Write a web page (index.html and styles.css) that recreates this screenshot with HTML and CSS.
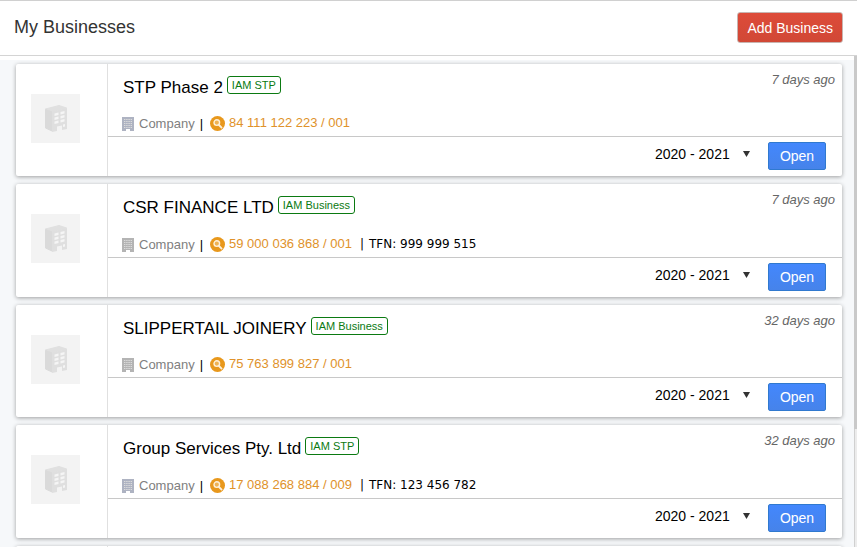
FILE: index.html
```html
<!DOCTYPE html>
<html lang="en">
<head>
    <meta charset="UTF-8">
    <meta name="viewport" content="width=device-width, initial-scale=1.0">
    <title>My Businesses</title>
    <link rel="stylesheet" href="styles.css">
</head>
<body>

    <!-- Shared icons -->
    <svg class="icon-defs" aria-hidden="true">
        <symbol id="icon-logo" viewBox="0 0 49 49">
            <path fill="#e0e0e0" stroke="#e0e0e0" stroke-linejoin="round" d="M14.500 15 L28 11.500 L35.500 14 L21 17.500 Z"/>
            <path fill="#dadada" stroke="#dadada" stroke-linejoin="round" d="M14.500 15.500 L21 18 L21 37 L14.500 34 Z"/>
            <path fill="#dfdfdf" d="M21 17.500 L36 14 L36 35 L31 36 L31 31.500 L26 32.500 L26 37 L21 38 Z"/>
            <path fill="#f5f5f5" d="M23.500 19.500l4-1v2.500l-4 1z M29.500 18l4-1v2.500l-4 1z M23.500 23.500l4-1v2.500l-4 1z M29.500 22l4-1v2.500l-4 1z M23.500 27.500l4-1v2.500l-4 1z M29.500 26l4-1v2.500l-4 1z M32 30.500l2-.5v2.500l-2 .5z"/>
        </symbol>
        <symbol id="icon-company" viewBox="0 0 12 14">
            <path fill="currentColor" d="M0 0h12v14H8v-2H4v2H0z"/>
            <path class="windows" d="M2 2.5h8M2 4.5h8M2 6.5h8M2 8.5h8M2 10.5h8" stroke-width="1" stroke-dasharray="1.4 .8" fill="none"/>
        </symbol>
        <symbol id="icon-search" viewBox="0 0 15 15">
            <circle cx="7.5" cy="7.5" r="7.5" fill="#e8981c"/>
            <circle cx="6.8" cy="6.6" r="2.8" fill="#efb353" stroke="#fdf0da" stroke-width="1.4"/>
            <path d="M9 9l2.6 2.6" stroke="#fdf0da" stroke-width="1.8" stroke-linecap="round"/>
        </symbol>
    </svg>

    <!-- Page Header -->
    <header class="page-header">
        <h1>My Businesses</h1>
        <button type="button" class="btn-add">Add Business</button>
    </header>

    <!-- Business List -->
    <div class="list-wrap">
        <main class="business-list">

            <article class="card">
                <div class="card-logo"><svg><use href="#icon-logo"/></svg></div>
                <div class="card-body">
                    <div class="card-info">
                        <div class="card-title">
                            <h2>STP Phase 2</h2>
                            <span class="badge">IAM STP</span>
                            <span class="updated">7 days ago</span>
                        </div>
                        <div class="details">
                            <svg class="company-icon blue"><use href="#icon-company"/></svg>
                            <span class="type">Company</span>
                            <span class="sep">|</span>
                            <a href="#" class="abn"><svg><use href="#icon-search"/></svg>84 111 122 223 / 001</a>
                        </div>
                    </div>
                    <div class="card-actions">
                        <div class="year"><select aria-label="Financial year for STP Phase 2"><option>2020 - 2021</option></select></div>
                        <button type="button" class="btn-open">Open</button>
                    </div>
                </div>
            </article>

            <article class="card">
                <div class="card-logo"><svg><use href="#icon-logo"/></svg></div>
                <div class="card-body">
                    <div class="card-info">
                        <div class="card-title">
                            <h2>CSR FINANCE LTD</h2>
                            <span class="badge">IAM Business</span>
                            <span class="updated">7 days ago</span>
                        </div>
                        <div class="details">
                            <svg class="company-icon"><use href="#icon-company"/></svg>
                            <span class="type">Company</span>
                            <span class="sep">|</span>
                            <a href="#" class="abn"><svg><use href="#icon-search"/></svg>59 000 036 868 / 001</a>
                            <span class="tfn"><span>|</span>TFN: 999 999 515</span>
                        </div>
                    </div>
                    <div class="card-actions">
                        <div class="year"><select aria-label="Financial year for CSR FINANCE LTD"><option>2020 - 2021</option></select></div>
                        <button type="button" class="btn-open">Open</button>
                    </div>
                </div>
            </article>

            <article class="card">
                <div class="card-logo"><svg><use href="#icon-logo"/></svg></div>
                <div class="card-body">
                    <div class="card-info">
                        <div class="card-title">
                            <h2>SLIPPERTAIL JOINERY</h2>
                            <span class="badge">IAM Business</span>
                            <span class="updated">32 days ago</span>
                        </div>
                        <div class="details">
                            <svg class="company-icon"><use href="#icon-company"/></svg>
                            <span class="type">Company</span>
                            <span class="sep">|</span>
                            <a href="#" class="abn"><svg><use href="#icon-search"/></svg>75 763 899 827 / 001</a>
                        </div>
                    </div>
                    <div class="card-actions">
                        <div class="year"><select aria-label="Financial year for SLIPPERTAIL JOINERY"><option>2020 - 2021</option></select></div>
                        <button type="button" class="btn-open">Open</button>
                    </div>
                </div>
            </article>

            <article class="card">
                <div class="card-logo"><svg><use href="#icon-logo"/></svg></div>
                <div class="card-body">
                    <div class="card-info">
                        <div class="card-title">
                            <h2>Group Services Pty. Ltd</h2>
                            <span class="badge">IAM STP</span>
                            <span class="updated">32 days ago</span>
                        </div>
                        <div class="details">
                            <svg class="company-icon blue"><use href="#icon-company"/></svg>
                            <span class="type">Company</span>
                            <span class="sep">|</span>
                            <a href="#" class="abn"><svg><use href="#icon-search"/></svg>17 088 268 884 / 009</a>
                            <span class="tfn"><span>|</span>TFN: 123 456 782</span>
                        </div>
                    </div>
                    <div class="card-actions">
                        <div class="year"><select aria-label="Financial year for Group Services Pty. Ltd"><option>2020 - 2021</option></select></div>
                        <button type="button" class="btn-open">Open</button>
                    </div>
                </div>
            </article>

            <article class="card">
                <div class="card-logo"></div>
            </article>

        </main>
        <div class="scroll-track"><div class="scroll-thumb"></div></div>
    </div>

</body>
</html>
```
FILE: styles.css
```css
* {
    box-sizing: border-box;
}

body {
    margin: 0;
    height: 100vh;
    display: flex;
    flex-direction: column;
    overflow: hidden;
    font-family: "Liberation Sans", Arial, sans-serif;
    font-size: 13px;
    color: #000;
    background-color: #fff;
}

.icon-defs {
    display: none;
}

button, select {
    font-family: inherit;
    font-size: 14px;
}

/* Page Header */
.page-header {
    display: flex;
    justify-content: space-between;
    align-items: center;
    padding: 11px 14px 12px 14px;
    border-top: 1px solid #d0d0d0;
    border-bottom: 1px solid #d4d4d4;
}

.page-header h1 {
    margin: 0;
    font-size: 18px;
    font-weight: normal;
    line-height: 28px;
    padding-bottom: 2px;
    color: #333;
}

.btn-add {
    height: 31px;
    padding: 0 9px;
    color: #fff;
    background: linear-gradient(#dd4b39, #d14836);
    border: 1px solid #c8b4b0;
    border-radius: 3px;
}

/* Business List */
.list-wrap {
    flex: 1;
    min-height: 0;
    display: flex;
}

.business-list {
    flex: 1;
    display: flex;
    flex-direction: column;
    gap: 8px;
    overflow: hidden;
    padding: 4px 12px 0 16px;
    border-top: 4px solid #fff;
    background-color: #f6f8fa;
}

.scroll-track {
    width: 3px;
    background-color: #ececec;
    border-left: 1px solid #d0d0d0;
}

.scroll-thumb {
    height: 76%;
    margin-left: -1px;
    background-color: #c9c9c9;
}

/* Cards */
.card {
    display: flex;
    flex-shrink: 0;
    background-color: #fff;
    border-radius: 2px;
    box-shadow: 0 1px 4px rgba(0, 0, 0, 0.37);
}

.card-logo {
    width: 92px;
    padding: 30px 0 0 15px;
    border-right: 1px solid #e0e0e0;
}

.card-logo svg {
    display: block;
    width: 49px;
    height: 49px;
    background-color: #f3f3f3;
}

.card-body {
    flex: 1;
}

.card-info {
    padding: 8px 7px 4px 15px;
    border-bottom: 1px solid #c8c8c8;
}

.card-title {
    display: flex;
    align-items: flex-start;
    gap: 4px;
    height: 43px;
}

.card-title h2 {
    margin: 0;
    padding-top: 6px;
    font-size: 17px;
    font-weight: normal;
    line-height: 20px;
}

.badge {
    margin-top: 4px;
    padding: 0 4px;
    font-size: 11px;
    line-height: 16px;
    color: #0b7a12;
    border: 1px solid #0b7a12;
    border-radius: 3px;
}

.updated {
    margin-left: auto;
    font-style: italic;
    line-height: 16px;
    color: #666;
}

.details {
    display: flex;
    align-items: flex-end;
    line-height: 16px;
}

.company-icon {
    width: 12px;
    height: 14px;
    margin: 0 5px 1px -1px;
    color: #b4b4b4;
}

.windows {
    stroke: #dcdcdc;
}

.company-icon.blue {
    color: #aeb3c2;
}

.type {
    color: #808080;
}

.sep {
    margin: 0 7px 0 5px;
}

.abn {
    display: flex;
    align-items: center;
    gap: 4px;
    padding-bottom: 1px;
    color: #e0922a;
    text-decoration: none;
}

.abn svg {
    width: 15px;
    height: 15px;
}

.tfn {
    display: flex;
    gap: 5px;
    margin-left: 8px;
    font-family: "DejaVu Sans", Tahoma, sans-serif;
    font-size: 12px;
    line-height: 18px;
}

/* Card Actions */
.card-actions {
    display: flex;
    justify-content: flex-end;
    gap: 17px;
    padding: 5px 16px 6px 0;
}

.year {
    position: relative;
}

.year select {
    appearance: none;
    width: 96px;
    height: 24px;
    padding: 0;
    color: #000;
    background: none;
    border: 0;
}

/* Dropdown arrow */
.year::after {
    content: "";
    position: absolute;
    top: 9px;
    right: 1px;
    width: 7px;
    height: 6px;
    background-color: #333;
    clip-path: polygon(0 0, 100% 0, 50% 100%);
    pointer-events: none;
}

.btn-open {
    width: 58px;
    height: 28px;
    padding: 0;
    color: #fff;
    background: linear-gradient(#4387fd, #4683ea);
    border: 1px solid #3079cf;
    border-radius: 2px;
}
```
